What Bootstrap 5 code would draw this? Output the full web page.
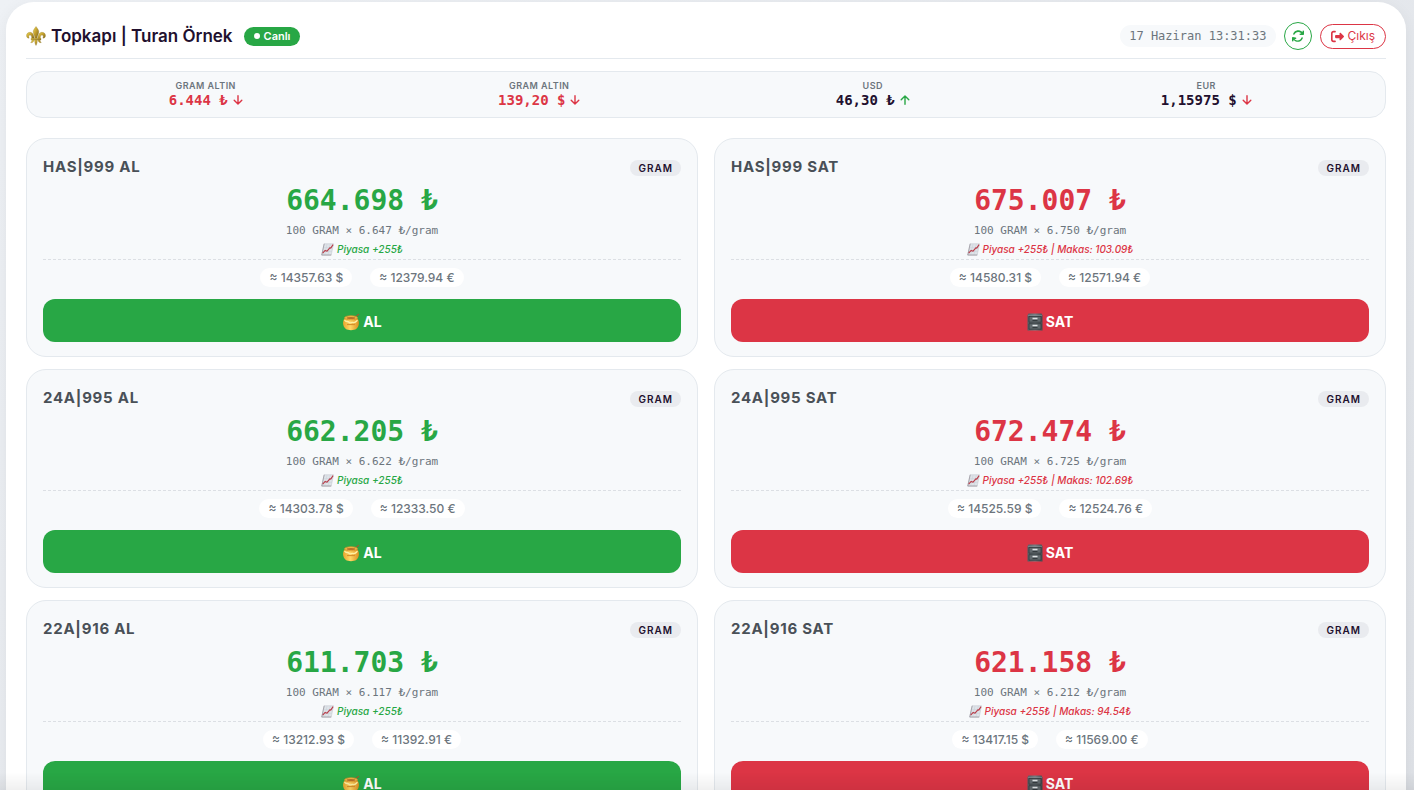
<!DOCTYPE html>
<html lang="tr">
<head>
<meta charset="utf-8">
<meta name="viewport" content="width=device-width, initial-scale=1">
<title>Topkapı | Turan Örnek</title>
<link rel="stylesheet" href="https://cdn.jsdelivr.net/npm/bootstrap@5.3.0/dist/css/bootstrap.min.css">
<style>
  :root { --al: #28a745; --sat: #dc3545; --ink: #22102e; --line: #e4e9ee; --soft: #f7f9fb; --grey: #6c757d; }
  body { font-family: Inter, sans-serif; color: var(--ink); background: linear-gradient(135deg, #eef1f5, #dfe2e7); background-attachment: fixed; padding: 2px 8px 0 6px; }
  .panel { background: #fff; border-radius: 28px; padding: 20px; box-shadow: 0 4px 16px rgba(0,0,0,.06); }
  .topbar { border-bottom: 1px solid var(--line); padding-bottom: 8px; margin-bottom: 12px; }
  .mono { font-family: "DejaVu Sans Mono", monospace; }
  .brand { font-size: 17px; line-height: 28px; font-weight: 600; padding-left: 5px; }
  .live { font-size: 11px; line-height: 19px; font-weight: 600; background: var(--al); padding: 0 10px; border-radius: 20px; margin-left: 11px; }
  .live-dot { width: 6px; height: 6px; background: #fff; }
  .clock { font-size: 12px; line-height: 22px; color: var(--grey); background: var(--soft); border-radius: 20px; padding: 0 9px; }
  .btn-refresh { width: 28px; height: 28px; border: 1px solid var(--al); color: var(--al); }
  .btn-exit { height: 25px; font-size: 12px; border: 1px solid var(--sat); color: var(--sat); border-radius: 20px; padding: 0 10px; }
  .btn-refresh:hover { background: var(--al); color: #fff; }
  .btn-exit:hover { background: var(--sat); color: #fff; }
  .ticker { background: var(--soft); border: 1px solid var(--line); border-radius: 16px; padding: 7px 12px 9px; margin-bottom: 20px; }
  .tick-name { font-size: 9px; line-height: 13px; font-weight: 600; letter-spacing: .05em; color: var(--grey); }
  .tick-value { font-size: 14px; line-height: 16px; font-weight: 700; gap: 5px; }
  .c-al { color: var(--al); }
  .c-sat { color: var(--sat); }
  .quotes { --bs-gutter-x: 16px; --bs-gutter-y: 12px; }
  .quote { background: var(--soft); border: 1px solid var(--line); border-radius: 20px; padding: 16px 16px 14px; }
  .quote-name { font-size: 15px; line-height: 24px; font-weight: 700; letter-spacing: .05em; color: #495057; }
  .unit { font-size: 10px; line-height: 16px; font-weight: 600; letter-spacing: 1px; background: #e9ebef; border-radius: 12px; padding: 0 8px; margin-top: 2px; }
  .price { font-size: 28px; line-height: 40px; font-weight: 700; margin-top: 2px; }
  .calc { font-size: 11px; line-height: 20px; color: var(--grey); }
  .trend { font-size: 10px; line-height: 16px; font-style: italic; font-weight: 500; gap: 3px; }
  .converted { border-top: 1px dashed #dcdfe4; margin-top: 2px; padding: 8px 0 12px; gap: 18px; }
  .chip { font-size: 12px; line-height: 19px; font-weight: 500; color: var(--grey); background: #fff; border-radius: 12px; padding: 0 9px; }
  .btn-trade { height: 43px; border-radius: 12px; font-size: 14px; font-weight: 700; color: #fff; padding-top: 2px; gap: 3px; }
  .btn-trade:hover { color: #fff; filter: brightness(.95); }
  .bg-al, .bg-al:hover { background: var(--al); }
  .bg-sat, .bg-sat:hover { background: var(--sat); }
  .edge-fade { height: 18px; background: linear-gradient(transparent, rgba(0,0,0,.06)); pointer-events: none; }
</style>
</head>
<body>
<svg class="position-absolute" width="0" height="0" aria-hidden="true">
  <defs>
    <linearGradient id="gold" x1="0" x2="1" y1="0" y2="1"><stop offset="0" stop-color="#f0d956"/><stop offset=".5" stop-color="#bd9a2c"/><stop offset="1" stop-color="#75601a"/></linearGradient>
    <linearGradient id="honey" x1="0" x2="1"><stop offset="0" stop-color="#e9a42c"/><stop offset=".45" stop-color="#ffd866"/><stop offset="1" stop-color="#dc8f20"/></linearGradient>
    <linearGradient id="steel" x1="0" x2="1"><stop offset="0" stop-color="#535b60"/><stop offset=".5" stop-color="#757d82"/><stop offset="1" stop-color="#42494d"/></linearGradient>
  </defs>
  <symbol id="i-down" viewBox="0 0 10 10"><path d="M5 .8v8M1.200 5.200 5 9l3.800-3.800" fill="none" stroke="currentColor" stroke-width="1.400" stroke-linecap="round" stroke-linejoin="round"/></symbol>
  <symbol id="i-up" viewBox="0 0 10 10"><path d="M5 9.200v-8M1.200 4.800 5 1l3.800 3.800" fill="none" stroke="currentColor" stroke-width="1.400" stroke-linecap="round" stroke-linejoin="round"/></symbol>
  <symbol id="i-chart" viewBox="0 0 14 14"><path d="M3.500.8h10L11 13H.8z" fill="#dfe3e8" stroke="#c3c8ce" stroke-width=".6"/><path d="M6.500 1 4 13M10 1 7.500 13M2.800 5h10M1.800 9h10" stroke="#c4ced8" stroke-width=".5"/><path d="M3.400.8.800 13H11" fill="none" stroke="#8c8790" stroke-width=".7"/><path d="m1.800 11 2.700-3 2 .8 3-3.600 1 .3L13 1.800" fill="none" stroke="#b83b48" stroke-width="1.200" stroke-linejoin="round"/></symbol>
  <symbol id="i-honey" viewBox="0 0 18 18"><path d="m12 5 4.500-3.500" stroke="#8e6535" stroke-width="1.500" stroke-linecap="round"/><path d="M3 5C.2 8 .4 13 3.800 16c2 1.500 8.400 1.500 10.400 0C17.600 13 17.800 8 15 5z" fill="url(#honey)"/><ellipse cx="9" cy="4.800" rx="6.500" ry="2" fill="#f5c04b" stroke="#d58e2c" stroke-width=".8"/><ellipse cx="9" cy="4.900" rx="4.500" ry="1" fill="#b8702a"/><path d="M2.500 7.200c2 2.500 3 .3 4.500 2s2.700-.4 4 .2 2 .5 4.500-2.200" fill="none" stroke="#fff0a4" stroke-width="1.300"/><path d="M5 11.500h8" stroke="#d8912d" stroke-width="1.200"/></symbol>
  <symbol id="i-cabinet" viewBox="0 0 16 18"><path d="M1.500.5h13l1 2v15H.5v-15z" fill="url(#steel)"/><path d="M.8 2.300h14.400" stroke="#899196" stroke-width=".8"/><path d="M2 3.500h12v5.700H2zm0 7.200h12v5.500H2z" fill="#626a6e" stroke="#343b3f" stroke-width=".8"/><path d="M5.500 4.800h5v1.500h-5zm0 7h5v1.500h-5z" fill="#e0e4e5"/><path d="M5.500 7.600h5M5.500 14.600h5" stroke="#30373a"/></symbol>
</svg>

<main class="panel">
  <header class="topbar d-flex justify-content-between align-items-center">
    <div class="d-flex align-items-center">
      <svg width="20" height="20" viewBox="0 0 20 20" aria-hidden="true"><g fill="url(#gold)" stroke="#8a7225" stroke-width=".3"><path d="M10 .5c-1.500 2-2.800 3.500-2.800 5.600 0 2.200 1.600 3.700 1.800 6.400h2c.2-2.700 1.800-4.200 1.800-6.400C12.800 4 11.500 2.500 10 .5z"/><path d="M8.300 13C8 9 6.500 6.300 4 6.300 1.700 6.300.400 8 .5 9.800c.1 1.600 1.300 2.700 2.700 2.300-.6-.6-.9-2.700.6-3 1.500-.2 2 1.500 1.900 3.900z"/><path d="M11.700 13c.3-4 1.800-6.700 4.300-6.700 2.300 0 3.600 1.700 3.500 3.500-.1 1.600-1.300 2.700-2.700 2.300.6-.6.9-2.700-.6-3-1.500-.2-2 1.500-1.900 3.900z"/><path d="M5 12.300h10v1.600H5z"/><path d="M8.700 14h2.600c0 2-.2 3.800-1.300 5.500-1.100-1.700-1.300-3.500-1.300-5.500zM8 14c-.4 2-1.500 2.900-3.300 2.600C5.600 16 5.700 15 6 14zm4 0c.4 2 1.500 2.900 3.300 2.600-.9-.6-1-1.600-1.300-2.600z"/></g></svg>
      <h1 class="brand mb-0">Topkapı | Turan Örnek</h1>
      <span class="live d-flex align-items-center text-white gap-1"><span class="live-dot rounded-circle"></span>Canlı</span>
    </div>
    <div class="d-flex align-items-center gap-2">
      <time class="clock mono">17 Haziran 13:31:33</time>
      <button type="button" class="btn btn-refresh rounded-circle p-0 d-flex align-items-center justify-content-center" aria-label="Yenile">
        <svg width="12" height="12" viewBox="0 0 512 512" fill="currentColor"><path d="M105 203c10-28 26-53 48-75 63-63 164-63 227 0l17 17h-45a32 32 0 0 0 0 64h128c18 0 32-14 32-32V49a32 32 0 0 0-64 0v51l-22-22C338-9 192-9 104 78 80 103 62 132 51 162c-6 17 3 35 20 41 16 6 34-3 40-20zM32 303c-18 0-32 14-32 32v128a32 32 0 0 0 64 0v-51l22 22c88 87 234 87 322 0 24-25 42-54 53-84 6-17-3-35-20-41s-35 3-41 20c-10 28-26 53-48 75-63 63-164 63-227 0l-17-17h45a32 32 0 0 0 0-64z"/></svg>
      </button>
      <button type="button" class="btn btn-exit d-flex align-items-center gap-1">
        <svg width="13" height="13" viewBox="0 0 512 512" fill="currentColor"><path d="m505 273-128 128c-15 15-41 4-41-17v-64H192c-18 0-32-14-32-32v-64c0-18 14-32 32-32h144v-64c0-21 26-32 41-17l128 128c9 9 9 25 0 34zM160 96a32 32 0 0 0 0-64H96C43 32 0 75 0 128v256c0 53 43 96 96 96h64a32 32 0 0 0 0-64H96c-18 0-32-14-32-32V128c0-18 14-32 32-32z"/></svg>Çıkış
      </button>
    </div>
  </header>

  <section class="ticker row g-0 text-center" aria-label="Piyasa">
    <div class="col-3"><div class="tick-name">GRAM ALTIN</div><div class="tick-value mono c-sat d-flex justify-content-center align-items-center">6.444 ₺<svg width="10" height="10" aria-hidden="true"><use href="#i-down"/></svg></div></div>
    <div class="col-3"><div class="tick-name">GRAM ALTIN</div><div class="tick-value mono c-sat d-flex justify-content-center align-items-center">139,20 $<svg width="10" height="10" aria-hidden="true"><use href="#i-down"/></svg></div></div>
    <div class="col-3"><div class="tick-name">USD</div><div class="tick-value mono d-flex justify-content-center align-items-center">46,30 ₺<svg class="c-al" width="10" height="10" aria-hidden="true"><use href="#i-up"/></svg></div></div>
    <div class="col-3"><div class="tick-name">EUR</div><div class="tick-value mono d-flex justify-content-center align-items-center">1,15975 $<svg class="c-sat" width="10" height="10" aria-hidden="true"><use href="#i-down"/></svg></div></div>
  </section>

  <section class="quotes row row-cols-2" id="quotes" aria-label="Fiyatlar"></section>
</main>
<div class="edge-fade fixed-bottom"></div>

<script>
  const quotes = [
    ["HAS|999", "al", "664.698", "6.647", "", "14357.63", "12379.94"],
    ["HAS|999", "sat", "675.007", "6.750", "103.09", "14580.31", "12571.94"],
    ["24A|995", "al", "662.205", "6.622", "", "14303.78", "12333.50"],
    ["24A|995", "sat", "672.474", "6.725", "102.69", "14525.59", "12524.76"],
    ["22A|916", "al", "611.703", "6.117", "", "13212.93", "11392.91"],
    ["22A|916", "sat", "621.158", "6.212", "94.54", "13417.15", "11569.00"]
  ];
  document.getElementById("quotes").innerHTML = quotes.map(([name, side, price, gram, spread, usd, eur]) => `
    <div class="col"><article class="quote">
      <div class="d-flex justify-content-between align-items-center">
        <h2 class="quote-name mb-0">${name} ${side.toUpperCase()}</h2><span class="unit">GRAM</span>
      </div>
      <div class="text-center">
        <div class="price mono c-${side}">${price} ₺</div>
        <div class="calc mono">100 GRAM × ${gram} ₺/gram</div>
        <div class="trend c-${side} d-flex justify-content-center align-items-center"><svg width="13" height="13" aria-hidden="true"><use href="#i-chart"/></svg>Piyasa +255₺${spread ? " | Makas: " + spread + "₺" : ""}</div>
      </div>
      <div class="converted d-flex justify-content-center"><span class="chip">≈ ${usd} $</span><span class="chip">≈ ${eur} €</span></div>
      <button type="button" class="btn btn-trade bg-${side} w-100 border-0 px-0 pb-0 d-flex align-items-center justify-content-center"><svg width="${side === "al" ? 18 : 16}" height="18" aria-hidden="true"><use href="#i-${side === "al" ? "honey" : "cabinet"}"/></svg>${side.toUpperCase()}</button>
    </article></div>`).join("");
</script>
<script src="https://cdn.jsdelivr.net/npm/bootstrap@5.3.0/dist/js/bootstrap.bundle.min.js"></script>
</body>
</html>
